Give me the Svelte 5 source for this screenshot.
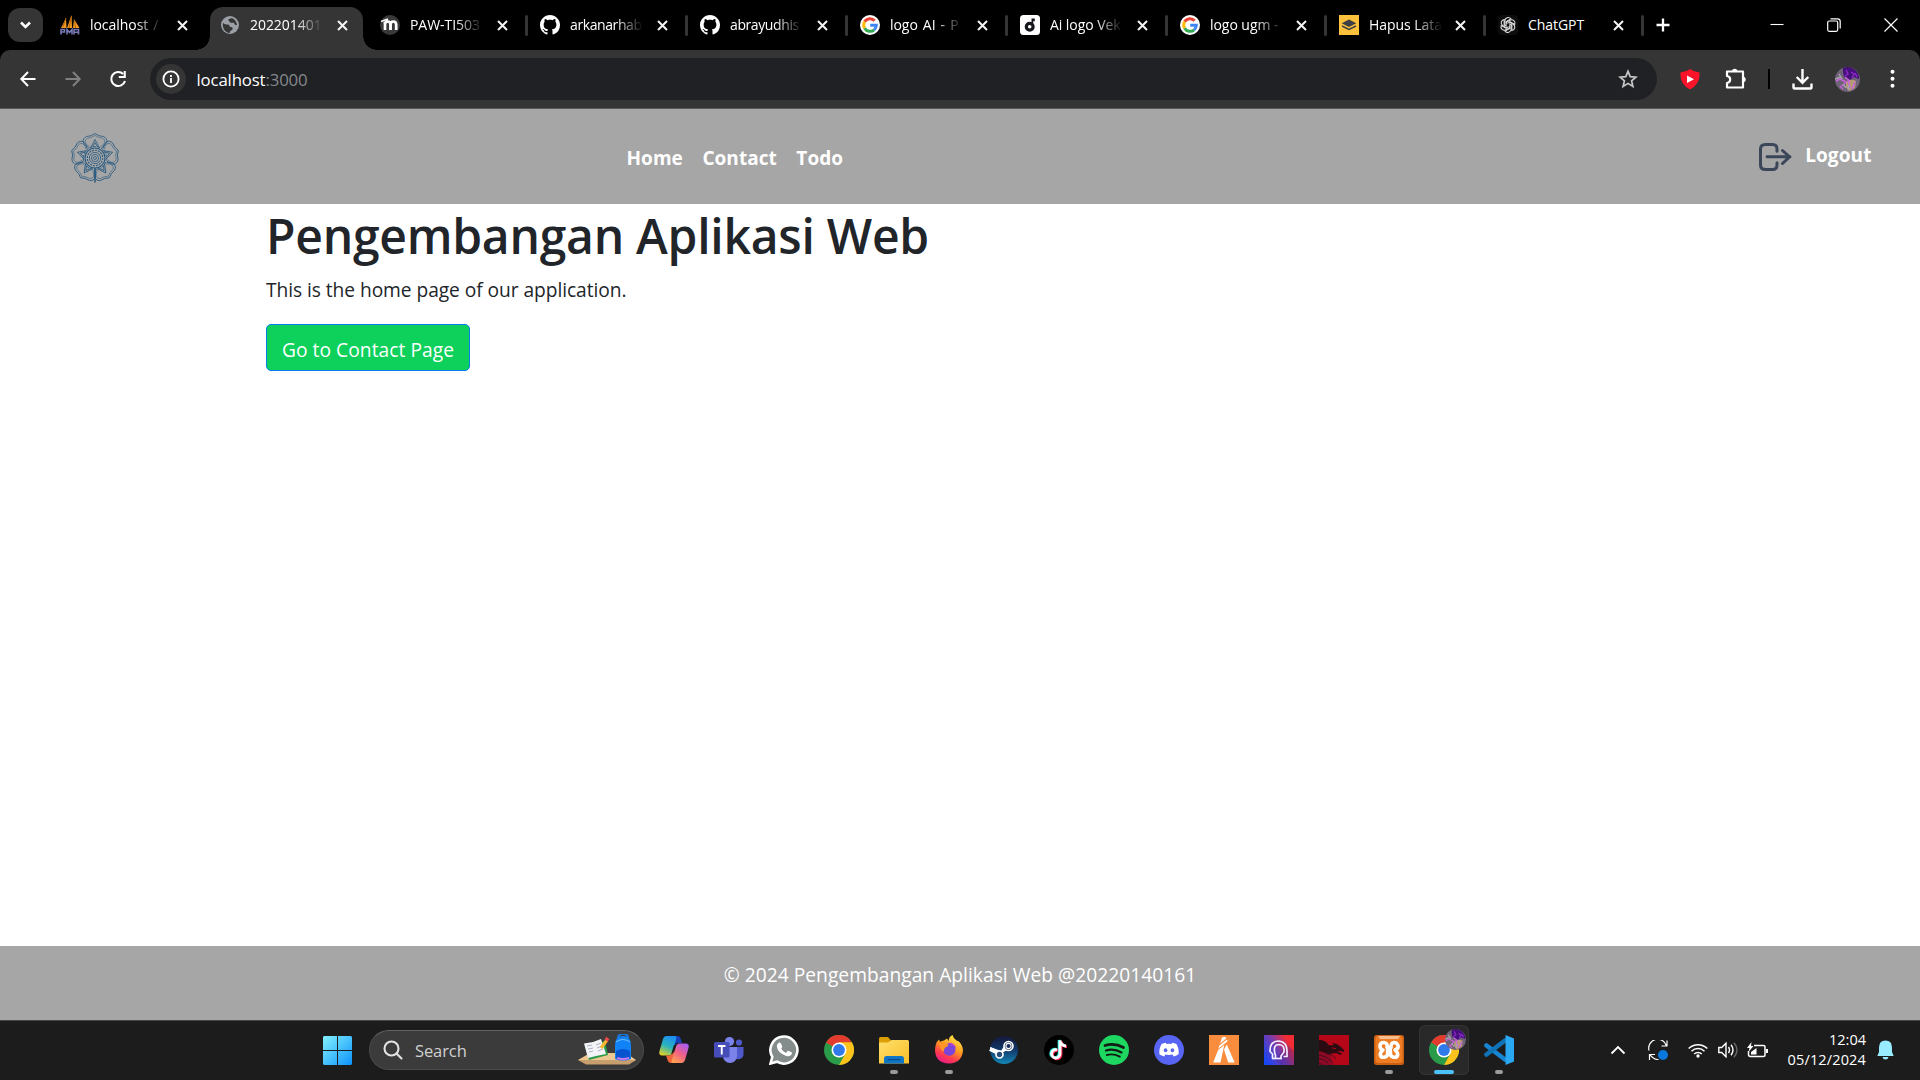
<script>
  const tabs = [
    { icon: 'pma', title: 'localhost /', width: 160, fit: 'loose' },
    { icon: 'globe', title: '202201401', width: 160, active: true },
    { icon: 'moodle', title: 'PAW-TI503', width: 160, sep: true },
    { icon: 'github', title: 'arkanarhab', width: 160, sep: true, fit: 'tight' },
    { icon: 'github', title: 'abrayudhis', width: 160, sep: true, fit: 'tight' },
    { icon: 'google', title: 'logo AI - P', width: 160, sep: true, fit: 'loose' },
    { icon: 'dimg', title: 'Ai logo Vek', width: 160, sep: true },
    { icon: 'google', title: 'logo ugm -', width: 159, sep: true },
    { icon: 'layers', title: 'Hapus Lata', width: 159, sep: true },
    { icon: 'gpt', title: 'ChatGPT', width: 158, sep: true, short: true }
  ];
  const links = ['Home', 'Contact', 'Todo'];
  const apps = [
    { icon: 'copilot' }, { icon: 'teams' }, { icon: 'whatsapp' }, { icon: 'chrome' },
    { icon: 'folder', run: true }, { icon: 'firefox', run: true }, { icon: 'steam' },
    { icon: 'tiktok' }, { icon: 'spotify' }, { icon: 'discord' }, { icon: 'fivem' },
    { icon: 'head' }, { icon: 'dragon' }, { icon: 'xampp', run: true },
    { icon: 'chrome', active: true }, { icon: 'vscode', run: true }
  ];
  const petals = [0, 72, 144, 216, 288];
  const knots = [0, 60, 120, 180, 240, 300];
</script>

{#snippet favicon(name)}
  <svg class="fav" viewBox="0 0 20 20">
    {#if name === 'pma'}
      <path d="M1 13 6 3 6.500 13zM7 13 11.500 0l.5 13zM13 13 14 4l5.500 9z" fill="#f29b24" />
      <path d="M3 12 6 3M9 13 11.500 1M15.500 13 14.500 5" stroke="#b86508" fill="none" />
      <path d="M1 19.500V14.500h3.500v2.500H1M7 19.500V14.500l2.500 3 2.500-3v5M14 19.500v-5h4.500v5M14 17.300h4.500" fill="none" stroke="#7779b5" stroke-width="1.600" />
    {:else if name === 'globe'}
      <circle cx="10" cy="10" r="9" fill="#9aa0a6" />
      <path d="M3 7.500c1 2 3 2 5 2 2 .5 1 2.500 3 2.500 2.500 0 2 3 0 3.500-1 .3-1 1.500-1.200 2.500C5 17.500 2 13 3 7.500zM9 4c2-1 3.500-1 5 .2C15.500 5.500 17 8 17 10c-1.500.5-2.500-.7-3-2-1-1-3 .5-4-.8C9 6 7.500 5 9 4z" fill="#353535" />
    {:else if name === 'moodle'}
      <circle cx="10" cy="10" r="10" fill="#39393b" />
      <path d="M1 6.500 8 4" stroke="#fff" stroke-width="1.500" />
      <path d="M5 15V9.500q0-3 2.700-3t2.700 3V15M10.600 15V9.500q0-3 2.700-3T16.200 9.500V15M4 9 8 5" fill="none" stroke="#fff" stroke-width="2.700" />
    {:else if name === 'github'}
      <path transform="scale(1.25)" fill="#fff" d="M8 0C3.580 0 0 3.580 0 8c0 3.540 2.290 6.530 5.470 7.590.4.070.55-.17.55-.38 0-.19-.01-.82-.01-1.490-2.010.37-2.530-.49-2.690-.94-.09-.23-.48-.94-.82-1.130-.28-.15-.68-.52-.01-.53.63-.01 1.080.58 1.230.82.72 1.210 1.870.87 2.330.66.070-.52.28-.87.51-1.070-1.780-.2-3.640-.89-3.640-3.950 0-.87.31-1.590.82-2.150-.08-.2-.36-1.020.08-2.120 0 0 .67-.21 2.200.82.64-.18 1.320-.27 2-.27s1.360.09 2 .27c1.530-1.040 2.200-.82 2.200-.82.44 1.100.16 1.920.08 2.120.51.56.82 1.270.82 2.150 0 3.070-1.870 3.750-3.650 3.950.29.25.54.73.54 1.480 0 1.070-.01 1.930-.01 2.200 0 .21.15.46.55.38A8.010 8.010 0 0 0 16 8c0-4.420-3.580-8-8-8z" />
    {:else if name === 'google'}
      <circle cx="10" cy="10" r="10" fill="#fff" />
      <g fill="none" stroke-width="3">
        <path d="M14.700 5.800A6.300 6.300 0 0 0 4.600 6.800" stroke="#ea4335" />
        <path d="M4.600 6.800a6.300 6.300 0 0 0 0 6.400" stroke="#fbbc05" />
        <path d="M4.600 13.200a6.300 6.300 0 0 0 9.600 1.600" stroke="#34a853" />
        <path d="M10.200 10.300h6.100a6.300 6.300 0 0 1-2.100 4.500" stroke="#4285f4" />
      </g>
    {:else if name === 'dimg'}
      <rect width="20" height="20" rx="3.500" fill="#fff" />
      <circle cx="9.700" cy="11.700" r="3.400" fill="none" stroke="#15171c" stroke-width="3.200" />
      <path d="M11.500 7V3.500h3.300v2.700h-1.600v4z" fill="#15171c" />
    {:else if name === 'layers'}
      <rect width="20" height="20" fill="#fdc13b" />
      <path d="m10 4.500 7.300 3.800L10 12 2.700 8.300z" fill="#3c3f44" />
      <path d="m3 11 7 3.500 7-3.500" fill="none" stroke="#3c3f44" stroke-width="1.500" />
    {:else}
      <rect width="20" height="20" rx="4" fill="#0d0d0d" />
      <g fill="none" stroke="#dedede" stroke-width="1.100">
        {#each knots as a}
          <path transform="rotate({a} 10 10)" d="M6.800 10.800V5.900a3.400 3.400 0 0 1 6.100-2L8.300 6.500v3.200" />
        {/each}
      </g>
    {/if}
  </svg>
{/snippet}

{#snippet chrome()}
  <circle cx="15" cy="15" r="15" fill="#2a9b48" />
  <path d="M15 15 2 7.500A15 15 0 0 1 28 7.500z" fill="#e33b2e" />
  <path d="M15 7.500h13A15 15 0 0 1 15 30l6.500-11.500z" fill="#fcc31c" />
  <path d="M15 7.500H28L21 18z" fill="#fcc31c" />
  <circle cx="15" cy="15" r="7.500" fill="#fff" />
  <circle cx="15" cy="15" r="5.900" fill="#3079eb" />
{/snippet}

{#snippet appIcon(name)}
  <svg class="app-icon" viewBox="0 0 30 30">
    {#if name === 'copilot'}
      <defs>
        <linearGradient id="cpA" x1="0.600" y1="0" x2="0.200" y2="1"><stop offset="0" stop-color="#1d8ff0" /><stop offset=".5" stop-color="#2bb4b8" /><stop offset="1" stop-color="#e8d323" /></linearGradient>
        <linearGradient id="cpB" x1="0.800" y1="0" x2="0.200" y2="1"><stop offset="0" stop-color="#a65cf5" /><stop offset=".5" stop-color="#f1608a" /><stop offset="1" stop-color="#ffa04d" /></linearGradient>
      </defs>
      <path d="M14 1h4.500q2.500 0 3.300 3L23 8h-4q-2.500 0-3.300 3z" fill="#173fb8" />
      <path d="M7.500 1H16q2 0 1.200 3l-4 13q-1 3.500-3.500 3.500H3Q-.5 20.500.5 16L4 4q1-3 3.500-3z" fill="url(#cpA)" />
      <path d="M7 20.500h3q2.500 0 3.300-3l1.500-4 1 12.500-1.500 2h-3q-2 0-2.800-3z" fill="#f0653c" />
      <path d="M22.500 28H14q-2 0-1.200-3l4-13q1-3.500 3.500-3.500H27q3.500 0 2.500 4.500L26 25q-1 3-3.500 3z" fill="url(#cpB)" />
      <path d="M14.800 10.500h1.800l-2.400 8h-1.800z" fill="#1c1c1c" />
    {:else if name === 'teams'}
      <circle cx="25" cy="7.500" r="3.100" fill="#5059c9" />
      <path d="M20 12h9.500v8a5.500 5.500 0 0 1-9 3z" fill="#5059c9" />
      <circle cx="15.500" cy="6.500" r="4.600" fill="#7b83eb" />
      <path d="M9 12h14v9a7 7 0 0 1-14 0z" fill="#7b83eb" />
      <rect y="7" width="15.500" height="15.500" rx="1.500" fill="#464cb8" />
      <path d="M4 11h7.500M7.750 11v8.500" stroke="#fff" stroke-width="1.900" />
    {:else if name === 'whatsapp'}
      <path d="M1.500 28.500 3.300 22A13.500 13.500 0 1 1 8 26.700z" fill="#858c8c" stroke="#fff" stroke-width="2.600" />
      <path d="M8.500 9q2-2.800 3.500-.5l1.200 2.700q.4.800-1 2.400 1.500 3 4.700 4.300l1.600-1.800q.6-.6 1.400-.2l2.600 1.300q.8.500.2 2-1.700 3-5.500 1.700-8-2.500-9.400-9.200Q7.700 10 8.500 9z" fill="#fff" />
    {:else if name === 'chrome'}
      {@render chrome()}
    {:else if name === 'folder'}
      <defs><linearGradient id="fo" x1="0" y1="0" x2="1" y2="1"><stop offset="0" stop-color="#ffdf6c" /><stop offset="1" stop-color="#f9bf28" /></linearGradient></defs>
      <path d="M0 3.500Q0 2 1.500 2H9l3 3.500V9H0z" fill="#dd9d06" />
      <path d="M0 7.500h9L12.500 5H28.500Q30 5 30 6.500V28.500H0z" fill="url(#fo)" />
      <path d="M5 28.500V23.500Q5 21 7.500 21h15Q25 21 25 23.500v5z" fill="#0f76c6" />
      <path d="M8.500 24.600h13" stroke="#0a4c8b" stroke-width="1.300" />
    {:else if name === 'firefox'}
      <defs>
        <linearGradient id="ff" x1=".8" y1="0" x2=".3" y2="1"><stop offset="0" stop-color="#fff04a" /><stop offset=".45" stop-color="#ff9a20" /><stop offset=".75" stop-color="#ff3b4d" /><stop offset="1" stop-color="#ea1a8b" /></linearGradient>
      </defs>
      <path d="M18.500 0q.5 3 4 5.500l2.500 1Q29 11 29 15.500 28 28 15 28.500 1.500 28 1 15.500 1 8 5 4.500L6 7q2-1.500 4-1.500L13 3.500 14.500 6q.5-4.500 4-6z" fill="url(#ff)" />
      <circle cx="15.300" cy="14.500" r="6.200" fill="#7a45d8" />
      <path d="M5 7q4-1 6 1.500l3.500 1q0 2-3 2.800-2 1.700-1.500 4.200-3-1-4-4z" fill="#ff9527" />
      <path d="M14 8q6-1 8.500 5.500-3-3-5-3z" fill="#b043d0" />
    {:else if name === 'steam'}
      <defs><linearGradient id="st" x1="0" y1="0" x2="0" y2="1"><stop offset="0" stop-color="#15183a" /><stop offset=".5" stop-color="#12396b" /><stop offset="1" stop-color="#1288b8" /></linearGradient></defs>
      <circle cx="15" cy="15" r="14" fill="url(#st)" />
      <path d="m1 14.500 8 3.500 4 0 7-4-4-4.500-4 6.500L1.200 12z" fill="#fff" />
      <path d="m1 14 9 4.500" stroke="#fff" stroke-width="4" />
      <circle cx="10.500" cy="19.500" r="3.500" fill="#294d7b" stroke="#fff" stroke-width="1.700" />
      <circle cx="19.500" cy="11" r="4.500" fill="#152d5a" stroke="#fff" stroke-width="1.600" />
      <circle cx="19.500" cy="11" r="2.600" fill="none" stroke="#fff" stroke-width="1.100" />
    {:else if name === 'tiktok'}
      <circle cx="15" cy="15" r="15" fill="#000" />
      <g fill="none" stroke-width="2.800">
        <path d="M13 14.800a4.200 4.200 0 1 0 3 4.200V5.500q.8 5 6 5.500" stroke="#25f4ee" transform="translate(-.9 -.5)" />
        <path d="M13 14.800a4.200 4.200 0 1 0 3 4.200V5.500q.8 5 6 5.500" stroke="#fe2c55" transform="translate(1 .8)" />
        <path d="M13 14.800a4.200 4.200 0 1 0 3 4.200V5.500q.8 5 6 5.500" stroke="#fff" />
      </g>
    {:else if name === 'spotify'}
      <circle cx="15" cy="15" r="15" fill="#1ed760" />
      <g fill="none" stroke="#101c14" stroke-linecap="round">
        <path d="M6 10.500q9.500-2.800 18.500 2" stroke-width="2.800" />
        <path d="M7 15.500q8-2.300 15.500 1.900" stroke-width="2.300" />
        <path d="M7.800 20q6.800-1.800 13 1.700" stroke-width="1.900" />
      </g>
    {:else if name === 'discord'}
      <circle cx="15" cy="15" r="15" fill="#5865f2" />
      <path d="m11.800 7.700.7 1.200q2.500-.4 5 0l.7-1.200q2.300.3 4.200 1.300 2.800 4.500 2.200 10.200-2 1.500-4.800 2.300l-1.200-1.900q-3.600.9-7.200 0l-1.200 1.900q-2.800-.8-4.800-2.300-.6-5.700 2.200-10.200 1.900-1 4.200-1.300z" fill="#fff" />
      <ellipse cx="11.600" cy="15.200" rx="1.800" ry="2" fill="#5865f2" /><ellipse cx="18.400" cy="15.200" rx="1.800" ry="2" fill="#5865f2" />
    {:else if name === 'fivem'}
      <rect width="30" height="30" fill="#fa8c3d" />
      <path d="M4.200 27.500 9.500 14l6-5-4 18.500zM15 14.500l2.800-5 7.900 18h-6.500z" fill="#fff" />
      <path d="M12.500 4 13.500 2h3l.7 1.500-6 5zM10.300 10.500 18 4.500l.7 2-9.500 7.500z" fill="#fff" />
      <path d="m9 14.500 10-8" stroke="#fa8c3d" stroke-width="1" />
    {:else if name === 'head'}
      <defs><linearGradient id="hd" x1="0" y1=".8" x2="1" y2=".2"><stop offset="0" stop-color="#1746f5" /><stop offset=".5" stop-color="#7a3bab" /><stop offset=".85" stop-color="#f22c34" /></linearGradient></defs>
      <rect width="30" height="30" fill="url(#hd)" />
      <path d="m11 24 6 6h13V16l-7-6z" fill="#3c1d84" opacity=".3" />
      <g fill="none" stroke="#f2edff" stroke-width="1.700">
        <path d="M8.500 23.500V19L6 16.500Q5.500 6 15 6q8 1 8 10v5.500h-3.500" />
        <path d="M11.500 23.500v-3q-3.500-11 3.500-11 6 .5 5 7.500l-3 4v2.500" />
        <path d="M8 23.500h10" />
      </g>
    {:else if name === 'dragon'}
      <rect width="30" height="30" fill="#b50718" />
      <path d="M0 15q8 2 12 7 2 4 3 8H0z" fill="#8d0a24" />
      <path d="M0 5q7 0 9.500 5 3.500 .5 5.500 0l-2-2.500 5.500 2L22 12l3.500 3.500-.8 1.500-2.700-1-4 0 5 2.500-1.500 1.500-4.500-2-4 .5Q9 20 5 17.500L0 16z" fill="#2a0b12" />
      <path d="M0 20q8 1 12 6M0 24q6 0 9 4M0 28l4 2M8 19q7 1 9 5" fill="none" stroke="#4b0b1f" />
      <path d="m13 13 4 .5" stroke="#b50718" />
    {:else if name === 'xampp'}
      <rect width="30" height="30" rx="2.500" fill="#c95f14" />
      <rect x="1.500" y="1" width="27" height="27" rx="3" fill="#ee7c23" />
      <path d="M4 1h22l-2 3H6z" fill="#f6bd90" />
      <path d="M13 12.500q1-4.800-3-5T6 11t3 4q-3.500 3-2.500 5.500t4.500 1.500 2.500-5h3q-1 4 2.500 5t4.500-1.500T21 15q4-1.500 3-4.500t-4-3-3 5z" fill="none" stroke="#fff" stroke-width="3.600" stroke-linejoin="round" />
      <path d="M12 12h6v6h-6z" fill="#fff" />
    {:else if name === 'vscode'}
      <path d="m2.500 10.500 18.500 14" stroke="#1785d2" stroke-width="4.600" stroke-linecap="round" />
      <path d="m2.500 19.500 18.500-14" stroke="#1073b8" stroke-width="4.600" stroke-linecap="round" />
      <path d="M21.500 0 30 3.500v23L21.500 30z" fill="#2aa8f2" />
    {/if}
  </svg>
{/snippet}

{#snippet avatar(cls)}
  <svg class={cls} viewBox="0 0 25 25">
    <circle cx="12.500" cy="12.500" r="12.500" fill="#6f6377" />
    <path d="M8 1q8-3 14 4 2.500 4 2 7l-5-2-4 3-6-3-1-5z" fill="#45107a" />
    <path d="M11 3l2 4-3 2M16 5l3 2-2 4M20 6l2 4" stroke="#8b28c9" stroke-width="1.500" fill="none" />
    <path d="M11 15q5-4 10-1l-1 7-6 3-3-4z" fill="#b79a78" />
    <path d="m1 14 4-2 6 3-4 4M13 13l2 8M5 19l3 3M20 15l-3 7M10 10l5 4" stroke="#cc62df" stroke-width="1.400" fill="none" />
    <path d="m0 12 6-2M8 17l3 4M14 18l-1 5M4 7l3 5" stroke="#a9a4ab" stroke-width="1.400" />
  </svg>
{/snippet}

<div class="screen">
  <div class="tabstrip">
    <div class="tab-search">
      <svg viewBox="0 0 35 34"><path d="m13 14.500 4.500 4.500 4.500-4.500" fill="none" stroke="#fff" stroke-width="2.500" /></svg>
    </div>
    <div class="tabs">
      {#each tabs as tab}
        <div class="tab {tab.fit ?? ''}" class:active={tab.active} style:width="{tab.width}px">
          {@render favicon(tab.icon)}
          <span class="tab-title" class:whole={tab.short}>{tab.title}</span>
          <svg class="tab-close" viewBox="0 0 11 11"><path d="m1 1 9 9M10 1l-9 9" stroke="#f4f4f4" stroke-width="2" /></svg>
          {#if tab.sep}<i class="tab-sep"></i>{/if}
        </div>
      {/each}
    </div>
    <svg class="new-tab" viewBox="0 0 14 14"><path d="M7 .5v13M.5 7h13" stroke="#fff" stroke-width="2.300" /></svg>
    <div class="window-buttons">
      <svg viewBox="0 0 14 14"><path d="M.5 6.500h13" stroke="#fff" stroke-width="1.100" /></svg>
      <svg viewBox="0 0 14 14" fill="none" stroke="#fff" stroke-width="1.200"><rect x=".7" y="3" width="10" height="10.300" rx="1.500" /><path d="M3.500.8h7q2.700 0 2.700 2.700V10.500" /></svg>
      <svg viewBox="0 0 14 14"><path d="m.5.500 13 13M13.500.5l-13 13" stroke="#fff" stroke-width="1.200" /></svg>
    </div>
  </div>

  <div class="toolbar">
    <div class="nav-buttons">
      <svg viewBox="0 0 20 20" fill="none" stroke="#fff" stroke-width="2"><path d="M17.500 10H3.500M10 3 3.300 10l6.700 7" /></svg>
      <svg viewBox="0 0 20 20" fill="none" stroke="#808080" stroke-width="2"><path d="M2.500 10h14M10 3l6.700 7L10 17" /></svg>
      <svg viewBox="0 0 20 20"><path d="M15.200 5A7 7 0 1 0 17 12" fill="none" stroke="#fff" stroke-width="2.100" /><path d="M17.800 2v7h-7V6.900h4.900V2z" fill="#fff" /></svg>
    </div>
    <div class="omnibox">
      <span class="site-info">
        <svg viewBox="0 0 18 18"><circle cx="9" cy="9" r="7.600" fill="none" stroke="#fff" stroke-width="1.800" /><path d="M9 8v5M9 5v1.900" stroke="#fff" stroke-width="1.800" /></svg>
      </span>
      <span class="url">localhost<em>:3000</em></span>
      <svg class="star" viewBox="0 0 20 20"><path d="m10 2.300 2.200 5.300 5.700.5-4.300 3.700 1.300 5.600L10 14.400l-4.900 3 1.300-5.600L2.100 8.100l5.700-.5z" fill="none" stroke="#c7c7c7" stroke-width="1.700" /></svg>
    </div>
    <div class="extensions">
      <svg class="shield" viewBox="0 0 20 21"><path d="M10 0q4 3 9.500 3.500Q20.500 15 10 20.500-.5 15 .5 3.500 6 3 10 0z" fill="#f9142a" /><path d="M7 6.500 14 10.300 7 14z" fill="#fff" /></svg>
      <svg class="puzzle" viewBox="0 0 21 21"><path d="M2 3.500H18V19.500H2V15q3.200-.5 3.200-3.500T2 8z" fill="none" stroke="#fff" stroke-width="2.200" stroke-linejoin="round" /><path d="M7 3.500a2.700 2.700 0 0 1 5.400 0zM18 8.800a2.700 2.700 0 0 1 0 5.400z" fill="#fff" /></svg>
      <i class="divider"></i>
      <svg class="download" viewBox="0 0 21 21" fill="none" stroke="#fff" stroke-width="2.400"><path d="M10.500 0v13M4.700 8l5.800 5.800L16.300 8M1.500 14.500v3.700q0 1.300 1.300 1.300h15.400q1.300 0 1.300-1.300v-3.700" /></svg>
      {@render avatar('profile')}
      <svg class="menu" viewBox="0 0 5 20" fill="#fff"><circle cx="2.500" cy="2.700" r="2" /><circle cx="2.500" cy="9.700" r="2" /><circle cx="2.500" cy="16.700" r="2" /></svg>
    </div>
  </div>

  <header class="site-nav">
    <svg class="crest" viewBox="-25 -25 50 50" fill="none" stroke="#24587f" stroke-width=".8">
      {#each petals as a}
        <g transform="rotate({a})">
          <path d="M-6.500-10.500C-13-14-13.500-19-8.500-21.500Q-4-21.500 0-24.500 4-21.500 8.500-21.500C13.500-19 13-14 6.500-10.500" />
          <path d="M-5.500-11.500C-10.500-14-11-18-7.500-19.800Q-4-20 0-22.500 4-20 7.500-19.800C11-18 10.500-14 5.500-11.500" opacity=".65" />
          <path d="M-4.500-10 0-18.500 4.500-10M-2.500-11 0-15.500 2.500-11" />
        </g>
      {/each}
      <circle r="11.500" stroke-dasharray="3 1" /><circle r="10" stroke-width="1.100" /><circle r="7.700" stroke-width="1.100" stroke-dasharray="2 1" /><circle r="5.600" /><circle r="3.600" /><circle r="1.500" />
      <path d="M0 10v14.500" stroke-width="1.400" />
    </svg>
    <nav>
      {#each links as link}<a href="#top">{link}</a>{/each}
    </nav>
    <div class="logout">
      <svg viewBox="0 0 34 30" fill="none" stroke="#3b4659" stroke-width="3" stroke-linecap="round" stroke-linejoin="round"><path d="M19 9.300V7q0-4.500-4.500-4.500h-7Q2.500 2.500 2.500 7v16q0 4.500 5 4.500h7Q19 27.500 19 23v-2.300M9 14.800h23M24.500 8.500l7 6.300-7 6.700" /></svg>
      <a href="#top">Logout</a>
    </div>
  </header>

  <main>
    <h1>Pengembangan Aplikasi Web</h1>
    <p>This is the home page of our application.</p>
    <a class="button" href="#top">Go to Contact Page</a>
  </main>

  <footer><p>© 2024 Pengembangan Aplikasi Web @20220140161</p></footer>

  <div class="taskbar">
    <svg class="start" viewBox="0 0 29 29">
      <defs><linearGradient id="win" x1="0" y1="0" x2="1" y2="1"><stop offset="0" stop-color="#83f1ff" /><stop offset="1" stop-color="#0d93fa" /></linearGradient></defs>
      <path d="M1 0h13v14H0V1zM15 0h13l1 1v13H15zM0 15h14v14H1l-1-1zM15 15h14v13l-1 1H15z" fill="url(#win)" />
    </svg>
    <div class="search">
      <svg class="glass" viewBox="0 0 20 20" fill="none" stroke="#e2e2e2" stroke-width="2.100"><circle cx="8.500" cy="8.500" r="7" /><path d="m13.500 13.500 5 5" stroke-linecap="round" /></svg>
      <span>Search</span>
      <svg class="desk" viewBox="0 0 58 32">
        <path d="M0 26 12 19H48l10 7-6 3H8z" fill="#edc792" /><path d="M0 26h58l-7 4.500H8z" fill="#c79e6d" />
        <path d="m7 12 20-5 3 14-19 5z" fill="#2c9b49" /><path d="m6 9.500 9-1.500 3 14-8 2zM15 8l8-3 5 15-10 2z" fill="#f3f4f8" />
        <path d="m9 12 5-1M10 15l5-1M11 18l4-1M18 11l5-2M19 14l5-2M20 17l5-2" stroke="#adb1bf" />
        <path d="m23 14 6-8" stroke="#fbb530" stroke-width="3.200" /><path d="m28 6.500 2-2.500" stroke="#e8484a" stroke-width="3.800" />
        <path d="M40 4q0-4 5-4t5 4" fill="none" stroke="#1878d8" stroke-width="2" />
        <path d="M37 11q0-9 8-9t8 9v14q-8 3-16 0z" fill="#1181f6" /><path d="M38 17q7-4 14 0v8q-7 2-14 0z" fill="#0754cf" /><path d="M39 24q6 2 12 0" stroke="#c97cf0" stroke-width="2" fill="none" /><path d="M38 8q7-5 14 0" fill="none" stroke="#74c4ff" />
      </svg>
    </div>
    <div class="apps">
      {#each apps as app}
        <div class="app" class:current={app.active} class:running={app.run}>
          {@render appIcon(app.icon)}
          {#if app.active}{@render avatar('badge')}{/if}
        </div>
      {/each}
    </div>
    <div class="tray">
      <svg class="chevron" viewBox="0 0 16 10"><path d="m1.500 8.500 6.500-6.500 6.500 6.500" fill="none" stroke="#fff" stroke-width="1.800" /></svg>
      <svg class="sync" viewBox="0 0 20 20"><path d="M1 10.500A9 9 0 0 1 18.500 6M19 .5V6h-5.500M1.500 20v-5.500H7M2 14.500q3 5 8.500 5" fill="none" stroke="#fff" stroke-width="1.200" /><circle cx="15" cy="15" r="5" fill="#0878dc" /></svg>
      <svg class="wifi" viewBox="0 0 20 16"><g fill="none" stroke="#fff" stroke-width="1.500"><path d="M.7 6.500a13.200 13.200 0 0 1 18.600 0M3.500 9.300a9.200 9.200 0 0 1 13 0M6.200 12a5.500 5.500 0 0 1 7.600 0" /></g><circle cx="10" cy="14" r="1.700" fill="#fff" /></svg>
      <svg class="volume" viewBox="0 0 20 16" fill="none" stroke="#fff" stroke-width="1.400"><path d="M.8 5.500h2.900L8 1.200v13.600L3.700 10.500H.8zM10.500 5q2 3 0 6M13 2.800q4 5.200 0 10.400" /><path d="M16 .8q6 7.200 0 14.400" stroke="#666" /></svg>
      <svg class="battery" viewBox="0 0 21 17"><path d="M7 3.500h9.500Q18 3.500 18 5v8q0 1.500-1.500 1.500H3.500Q1.500 14.500 1.500 12.500V9" fill="none" stroke="#fff" stroke-width="1.500" /><path d="M19 7h2v4h-2zM9.500 6v6.500H4v-2.500zM4.500 0 0 6h2.500L1.500 10 6.500 4H4z" fill="#fff" /></svg>
      <div class="clock"><span>12:04</span><span class="date">05/12/2024</span></div>
      <svg class="bell" viewBox="0 0 17 20" fill="#99ebff"><path d="M2 7.500Q2 .5 8.500.5T15 7.500V12l1.700 4H.3L2 12zM5.500 17h6q-.5 2.500-3 2.500t-3-2.500z" /></svg>
    </div>
  </div>
</div>

<style>
  :global(body) { margin: 0; overflow: hidden; }
  .screen {
    width: 1920px; height: 1080px; display: flex; flex-direction: column;
    background: #fff; overflow: hidden;
    font-family: "Open Sans", "Noto Sans", sans-serif; color: #212529;
  }
  .screen, .screen * { box-sizing: border-box; }
  svg { display: block; flex: none; }
  a { color: inherit; text-decoration: none; }

  .tabstrip { height: 60px; margin-bottom: -10px; flex: none; background: #000; display: flex; align-items: flex-start; padding-left: 8px; }
  .tab-search { width: 35px; height: 34px; margin: 8px 7px 0 0; border-radius: 12px; background: #353535; }
  .tabs { display: flex; }
  .tab { position: relative; height: 50px; display: flex; align-items: center; padding: 0 22px 0 10px; flex: none; }
  .fav { width: 20px; height: 20px; }
  .tab-title {
    width: 73px; margin: 0 auto 0 10px; white-space: nowrap;
    color: #fff; font-size: 14px; line-height: 22px; letter-spacing: -.05px;
    mask-image: linear-gradient(90deg, #000 62%, transparent 100%);
  }
  .tab-title.whole { mask-image: none; }
  .loose .tab-title { word-spacing: 1.500px; }
  .tight .tab-title { letter-spacing: -.4px; }
  .tab-close { width: 11px; height: 11px; }
  .tab-sep { position: absolute; right: 2px; top: 15px; width: 3px; height: 21px; border-radius: 2px; background: #353535; }
  .tab.active::before {
    content: ""; position: absolute; left: 0; top: 7px; width: 153px; height: 43px;
    background: #353535; border-radius: 13px 13px 0 0;
  }
  .tab.active::after {
    content: ""; position: absolute; left: -14px; bottom: 0; width: 181px; height: 14px;
    background:
      radial-gradient(circle at 0 0, transparent 13.500px, #353535 14px) left / 14px 14px no-repeat,
      radial-gradient(circle at 100% 0, transparent 13.500px, #353535 14px) right / 14px 14px no-repeat;
  }
  .tab.active > * { position: relative; z-index: 1; }
  .new-tab { width: 14px; height: 14px; margin: 18px 0 0 10px; }
  .window-buttons { display: flex; gap: 43px; margin: 18px 22px 0 auto; }
  .window-buttons svg { width: 14px; height: 14px; }

  .toolbar {
    position: relative; height: 59px; flex: none; display: flex; align-items: center; background: #353535;
    border-radius: 10px 10px 0 0; border-bottom: 1px solid #5d5959; padding-left: 17.500px;
  }
  .nav-buttons { display: flex; gap: 25px; }
  .nav-buttons svg { width: 20px; height: 20px; }
  .omnibox { width: 1507px; height: 42px; margin-left: 22.500px; border-radius: 21px; background: #202124; display: flex; align-items: center; padding: 0 19px 0 6px; }
  .site-info { width: 30px; height: 30px; border-radius: 50%; background: #353535; display: grid; place-items: center; }
  .site-info svg { width: 18px; height: 18px; }
  .url { margin: 2px auto 0 10.500px; font-size: 16.800px; line-height: 24px; color: #fff; letter-spacing: -.15px; }
  .url em { font-style: normal; color: #85888c; }
  .star { width: 20px; height: 20px; }
  .extensions { display: flex; align-items: center; margin-left: 23px; }
  .shield { width: 20px; height: 21px; }
  .puzzle { width: 21px; height: 21px; margin-left: 25px; margin-top: -2px; }
  .divider { width: 2px; height: 20px; background: #000; margin-left: 22px; }
  .download { width: 21px; height: 21px; margin-left: 22px; }
  .extensions :global(.profile) { width: 25px; height: 25px; margin-left: 22px; }
  .menu { width: 5px; height: 20px; margin-left: 30px; }

  .site-nav { height: 95px; flex: none; display: flex; align-items: flex-start; background: #a6a6a6; color: #fff; font-weight: 700; font-size: 19px; line-height: 30px; }
  .crest { width: 50px; height: 50px; margin: 24px 0 0 70px; }
  nav { display: flex; gap: 19.500px; margin: 34px 0 0 506.500px; letter-spacing: .05px; }
  .logout { display: flex; margin: 31px 48.500px 0 auto; gap: 13px; letter-spacing: .1px; }
  .logout svg { width: 34px; height: 30px; margin-top: 2px; }

  main { flex: 1; padding-left: 266px; }
  h1 { margin: 0; padding-top: 1px; font-size: 48px; line-height: 62px; font-weight: 600; letter-spacing: -.25px; white-space: nowrap; }
  main p { margin: 8px 0 0; font-size: 19.200px; line-height: 30px; letter-spacing: -.06px; }
  .button {
    display: flex; align-items: center; justify-content: center; width: 204px; height: 47px; margin-top: 19px; padding-top: 3px;
    background: #0dd15b; border: 1px solid #087cf0; border-radius: 5px; color: #fff; font-size: 19.200px; white-space: nowrap; letter-spacing: .05px;
  }
  footer { height: 74px; flex: none; background: #a6a6a6; color: #fff; text-align: center; font-size: 19.200px; line-height: 30px; padding-top: 14px; letter-spacing: .03px; }
  footer p { margin: 0; }

  .taskbar { height: 60px; flex: none; display: flex; align-items: center; background: #1c1c1c; border-top: 1px solid #454747; padding: 0 0 1px 323px; }
  .start { width: 29px; height: 29px; margin-right: 17px; }
  .search { width: 275px; height: 40px; border-radius: 20px; background: #3b3b3b; border: 1px solid #4b4b4b; border-top-color: #626262; display: flex; align-items: center; padding: 0 7px 0 13px; }
  .glass { width: 20px; height: 20px; }
  .search span { margin: 0 auto 0 12px; font-size: 16.500px; color: #d0d0d0; letter-spacing: -.1px; }
  .desk { width: 58px; height: 32px; }
  .apps { display: flex; gap: 5px; margin-left: 5px; }
  .app { position: relative; width: 50px; height: 50px; border-radius: 6px; display: grid; place-items: center; }
  .app-icon { width: 30px; height: 30px; }
  .app.current { background: #292929; box-shadow: inset 0 0 0 1px #333; }
  .app.running::after, .app.current::after { content: ""; position: absolute; left: 21px; bottom: 1px; width: 8px; height: 4px; border-radius: 2px; background: #9a9a9a; }
  .app.current::after { left: 15px; width: 20px; background: #4cc2ff; }
  .app :global(.badge) { position: absolute; left: 26px; top: 4px; width: 21px; height: 21px; }
  .tray { display: flex; align-items: center; margin-left: auto; padding-right: 26px; }
  .chevron { width: 16px; height: 10px; margin-right: 22px; }
  .sync { width: 20px; height: 20px; margin-right: 20px; }
  .wifi { width: 20px; height: 16px; margin-right: 10px; }
  .volume { width: 20px; height: 16px; margin-right: 9px; }
  .battery { width: 21px; height: 17px; }
  .clock { width: 98px; display: flex; flex-direction: column; align-items: flex-end; color: #fff; font-size: 14.500px; line-height: 20px; }
  .date { letter-spacing: .15px; }
  .bell { width: 17px; height: 20px; margin-left: 11px; }
</style>
